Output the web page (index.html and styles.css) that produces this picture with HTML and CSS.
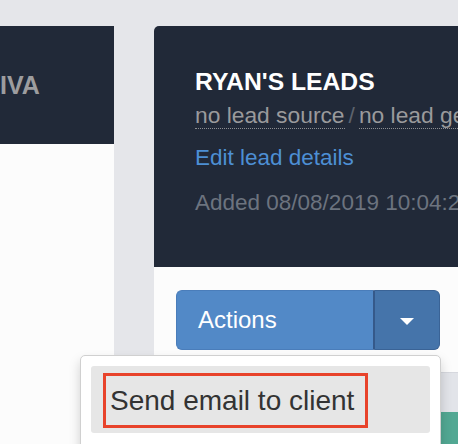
FILE: index.html
```html
<!DOCTYPE html>
<html>
<head>
<meta charset="utf-8">
<link rel="stylesheet" href="styles.css">
</head>
<body>
<div class="page">
  <aside class="side">
    <div class="side-head"><span class="side-title">IVA</span></div>
    <div class="side-body"></div>
  </aside>
  <section class="card">
    <header class="card-head">
      <h1 class="lead-title">RYAN'S LEADS</h1>
      <div class="lead-meta"><span class="dotted">no lead source</span><span class="sep">/</span><span class="dotted">no lead generator</span></div>
      <div class="edit-row"><a class="edit-link">Edit lead details</a></div>
      <div class="added">Added 08/08/2019 10:04:21</div>
    </header>
    <div class="card-body">
      <div class="btn-group">
        <button class="btn-main">Actions</button>
        <button class="btn-caret"><span class="caret"></span></button>
      </div>
      <div class="table-head"></div>
      <div class="table-row"></div>
    </div>
  </section>
</div>
<div class="menu">
  <div class="menu-item"><span class="highlight">Send email to client</span></div>
</div>
</body>
</html>
```
FILE: styles.css
```css
* { box-sizing: border-box; }
html, body {
  margin: 0;
  padding: 0;
  height: 444px;
  overflow: hidden;
}
body {
  background: #e5e6ea;
  font-family: "Liberation Sans", Arial, sans-serif;
  position: relative;
}
.page {
  display: flex;
  gap: 40px;
  padding-top: 26px;
  height: 444px;
  width: 458px;
  overflow: hidden;
}
.side {
  width: 114px;
  display: flex;
  flex-direction: column;
  flex: none;
}
.side-head {
  background: #212938;
  height: 118px;
  flex: none;
  padding-top: 44px;
  overflow: hidden;
}
.side-title {
  display: block;
  font-weight: bold;
  font-size: 25px;
  line-height: 30px;
  color: #9d9d9f;
}
.side-body {
  flex: 1;
  background: #fcfcfc;
}
.card {
  width: 366px;
  flex: none;
  display: flex;
  flex-direction: column;
  border-top-left-radius: 5px;
  overflow: hidden;
}
.card-head {
  background: #212938;
  height: 241px;
  flex: none;
  padding: 41px 0 0 41px;
  white-space: nowrap;
  overflow: hidden;
}
.lead-title {
  margin: 0;
  font-size: 24.7px;
  line-height: 30px;
  font-weight: bold;
  color: #ffffff;
}
.lead-meta {
  margin-top: 3px;
  font-size: 22.8px;
  line-height: 30px;
  color: #9a9a9c;
}
.dotted {
  border-bottom: 1.5px dotted #8c8e92;
}
.sep {
  margin: 0 4px;
  color: #5d636d;
}
.edit-row {
  margin-top: 13px;
  font-size: 22.5px;
  line-height: 30px;
}
.edit-link {
  color: #4d8fd4;
  text-decoration: none;
}
.added {
  margin-top: 15px;
  font-size: 22.5px;
  line-height: 30px;
  color: #6c737f;
}
.card-body {
  flex: 1;
  background: #fcfcfc;
  padding: 23px 0 0 0;
  overflow: hidden;
}
.btn-group {
  display: flex;
  margin-left: 22px;
  width: 264px;
  height: 60px;
}
.btn-main {
  flex: 1;
  margin: 0;
  background: #5289c7;
  border: 1px solid #4a7dba;
  border-right: none;
  border-radius: 6px 0 0 6px;
  color: #ffffff;
  font-family: "Liberation Sans", Arial, sans-serif;
  font-size: 24px;
  text-align: left;
  padding: 0 0 0 21px;
}
.btn-caret {
  width: 67px;
  margin: 0;
  background: #4574aa;
  border: 1px solid #3a6396;
  border-left: 2px solid #35598a;
  border-radius: 0 6px 6px 0;
  display: flex;
  align-items: center;
  justify-content: center;
  padding: 0;
}
.caret {
  display: block;
  width: 0;
  height: 0;
  margin-top: 3px;
  border-left: 7.5px solid transparent;
  border-right: 7.5px solid transparent;
  border-top: 7px solid #ffffff;
}
.table-head {
  margin-top: 22px;
  height: 40px;
  background: #e2e4e9;
  border-top: 1px solid #d6d8de;
}
.table-row {
  height: 60px;
  background: #52a893;
}
.menu {
  position: absolute;
  left: 80px;
  top: 355px;
  width: 361px;
  height: 120px;
  background: #ffffff;
  border: 1px solid #d0d0d0;
  border-radius: 5px;
  box-shadow: 0 6px 12px rgba(0, 0, 0, 0.175);
  padding: 10px 10px 0 10px;
}
.menu-item {
  background: #e6e6e6;
  border-radius: 3px;
  height: 67px;
  padding: 7px 0 0 12px;
}
.highlight {
  display: inline-block;
  height: 55px;
  border: 3px solid #e8432b;
  padding: 0 11px 0 4px;
  font-size: 28px;
  line-height: 49px;
  color: #333333;
}
```
